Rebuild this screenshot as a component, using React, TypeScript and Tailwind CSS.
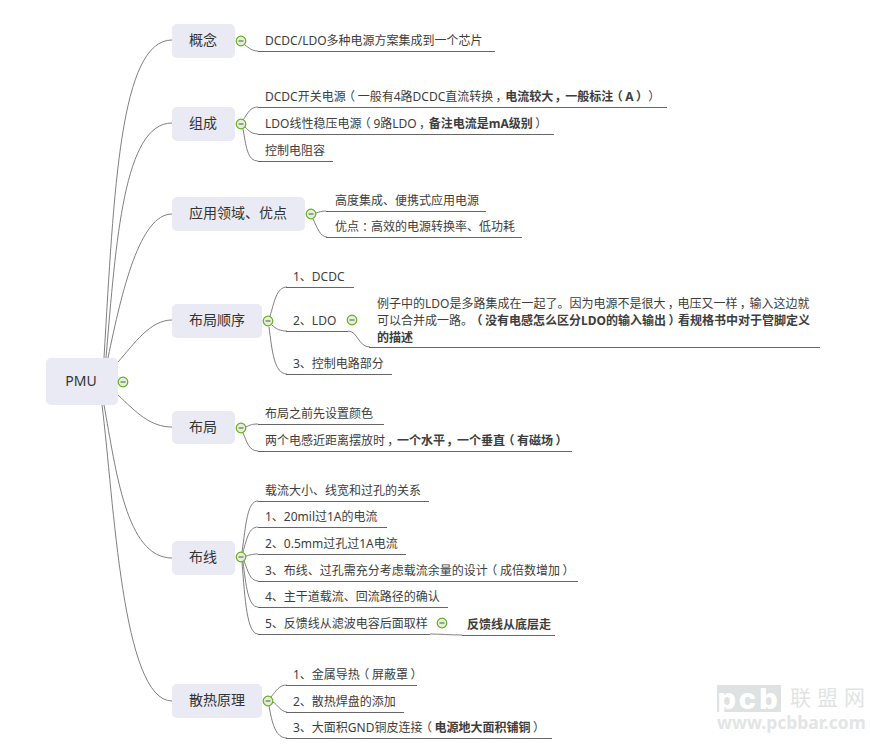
const font = 'font-["Noto_Sans","Noto_Sans_CJK_SC",sans-serif]'

const curves = [
    // root to topics
    'M104 358 C114 190 120 40 172 40',
    'M106 358 C116 240 124 123 172 123',
    'M108 358 C122 290 140 214 172 214',
    'M118 362 C134 344 150 320 172 320',
    'M118 395 C136 412 150 427 172 427',
    'M104 405 C116 470 126 558 172 558',
    'M102 405 C114 500 122 701 172 701',
    // concept
    'M245 45 C249 48 252 51 258 51',
    // parts
    'M243 120 C248 113 250 107 258 107',
    'M245 127 C249 131 252 134 258 134',
    'M243 129 C246 145 247 161 258 161',
    // usage
    'M316 213 C319 212 322 211 326 211',
    'M313 219 C317 227 320 237 327 237',
    // order
    'M270 316 C274 304 276 287 287 287',
    'M272 325 C276 329 280 331 287 331',
    'M269 327 C272 350 274 374 287 374',
    'M348 331 C358 331 358 347 370 347',
    // layout
    'M246 427 C250 425 252 424 258 424',
    'M243 433 C247 442 249 451 258 451',
    // routing
    'M242 552 C246 525 247 501 258 501',
    'M243 552 C247 538 249 527 258 527',
    'M246 556 C250 555 252 554 258 554',
    'M244 561 C248 571 250 581 258 581',
    'M243 562 C246 585 248 607 258 607',
    'M242 562 C245 600 247 634 258 634',
    'M430 634 C440 634 450 635 462 635',
    // heat
    'M271 697 C276 691 279 685 287 685',
    'M273 702 C277 704 281 712 287 712',
    'M269 706 C272 722 275 738 287 738',
]

function Collapse({ pos }: { pos: string }) {
    return (
        <svg className={`absolute ${pos}`} width="12" height="12" viewBox="0 0 12 12">
            <circle cx="6" cy="6" r="4.8" fill="#e4eeda" stroke="#5fb01c" strokeWidth="1.2" />
            <path d="M3.5 6 H8.5" stroke="#55554a" strokeWidth="1" />
        </svg>
    )
}

function Topic({ pos, children }: { pos: string; children: React.ReactNode }) {
    return (
        <div className={`absolute flex items-center rounded-[5px] bg-[#e9eaf3] pb-[3px] pl-[17px] text-[14px] text-[#333] ${pos}`}>
            {children}
        </div>
    )
}

function Leaf({ pos, children }: { pos: string; children: React.ReactNode }) {
    return (
        <div className={`absolute h-[24px] whitespace-nowrap border-b border-[#666] pt-px text-[12px] leading-[23px] text-[#3d3d3d] ${pos}`}>
            {children}
        </div>
    )
}

// fullwidth punctuation sits centred in its 12px cell in the picture
const P = ({ c }: { c: string }) => (
    <span className="inline-block w-[12px] text-center [font-feature-settings:'palt']">{c}</span>
)

export default function App() {
    return (
        <div className={`relative h-[749px] w-[870px] overflow-hidden bg-white ${font}`}>
            <svg className="absolute inset-0" width="870" height="749" fill="none" stroke="#808080">
                {curves.map((d) => (
                    <path key={d} d={d} />
                ))}
            </svg>

            {/* Root */}
            <div className="absolute left-[46px] top-[358px] flex h-[47px] w-[72px] items-center justify-center rounded-[5px] bg-[#e9eaf3] pb-[2px] pr-[2px] text-[14px] text-[#333]">
                PMU
            </div>
            <Collapse pos="left-[117px] top-[376px]" />

            {/* Topics */}
            <Topic pos="left-[172px] top-[24px] h-[34px] w-[63px]">概念</Topic>
            <Collapse pos="left-[235px] top-[35px]" />
            <Topic pos="left-[172px] top-[107px] h-[34px] w-[63px]">组成</Topic>
            <Collapse pos="left-[235px] top-[118px]" />
            <Topic pos="left-[172px] top-[197px] h-[34px] w-[133px]">应用领域、优点</Topic>
            <Collapse pos="left-[305px] top-[208px]" />
            <Topic pos="left-[172px] top-[304px] h-[34px] w-[90px]">布局顺序</Topic>
            <Collapse pos="left-[262px] top-[315px]" />
            <Topic pos="left-[172px] top-[411px] h-[33px] w-[63px]">布局</Topic>
            <Collapse pos="left-[235px] top-[422px]" />
            <Topic pos="left-[172px] top-[541px] h-[34px] w-[63px]">布线</Topic>
            <Collapse pos="left-[235px] top-[551px]" />
            <Topic pos="left-[172px] top-[684px] h-[34px] w-[90px]">散热原理</Topic>
            <Collapse pos="left-[262px] top-[695px]" />

            {/* Concept */}
            <Leaf pos="left-[258px] top-[28px] w-[237px] pl-[7px]">DCDC/LDO多种电源方案集成到一个芯片</Leaf>

            {/* Parts */}
            <Leaf pos="left-[258px] top-[84px] w-[409px] pl-[7px]">
                DCDC开关电源<P c="（" />一般有4路DCDC直流转换<P c="，" />
                <b>电流较大<P c="，" />一般标注<P c="（" />A<P c="）" /></b><P c="）" />
            </Leaf>
            <Leaf pos="left-[258px] top-[111px] w-[296px] pl-[7px]">
                LDO线性稳压电源<P c="（" />9路LDO<P c="，" /><b>备注电流是mA级别</b><P c="）" />
            </Leaf>
            <Leaf pos="left-[258px] top-[138px] w-[75px] pl-[7px]">控制电阻容</Leaf>

            {/* Usage */}
            <Leaf pos="left-[326px] top-[188px] w-[160px] pl-[9px]">高度集成、便携式应用电源</Leaf>
            <Leaf pos="left-[326px] top-[214px] w-[196px] pl-[9px]">优点<P c="：" />高效的电源转换率、低功耗</Leaf>

            {/* Order */}
            <Leaf pos="left-[286px] top-[264px] w-[68px] pl-[7px]">1、DCDC</Leaf>
            <Leaf pos="left-[286px] top-[308px] w-[62px] pl-[7px]">2、LDO</Leaf>
            <Collapse pos="left-[346px] top-[314px]" />
            <div className="absolute left-[369px] top-[294px] h-[54px] w-[451px] whitespace-nowrap border-b border-[#666] pl-[8px] pt-px text-[12px] leading-[17px] text-[#3d3d3d]">
                例子中的LDO是多路集成在一起了。因为电源不是很大<P c="，" />电压又一样<P c="，" />输入这边就
                <br />
                可以合并成一路。<b><P c="（" />没有电感怎么区分LDO的输入输出<P c="）" />看规格书中对于管脚定义</b>
                <br />
                <b>的描述</b>
            </div>
            <Leaf pos="left-[286px] top-[351px] w-[106px] pl-[7px]">3、控制电路部分</Leaf>

            {/* Layout */}
            <Leaf pos="left-[258px] top-[401px] w-[126px] pl-[7px]">布局之前先设置颜色</Leaf>
            <Leaf pos="left-[258px] top-[428px] w-[314px] pl-[7px]">
                两个电感近距离摆放时<P c="，" /><b>一个水平<P c="，" />一个垂直<P c="（" />有磁场<P c="）" /></b>
            </Leaf>

            {/* Routing */}
            <Leaf pos="left-[258px] top-[478px] w-[171px] pl-[7px]">载流大小、线宽和过孔的关系</Leaf>
            <Leaf pos="left-[258px] top-[504px] w-[129px] pl-[7px]">1、20mil过1A的电流</Leaf>
            <Leaf pos="left-[258px] top-[531px] w-[148px] pl-[7px]">2、0.5mm过孔过1A电流</Leaf>
            <Leaf pos="left-[258px] top-[558px] w-[320px] pl-[7px]">3、布线、过孔需充分考虑载流余量的设计<P c="（" />成倍数增加<P c="）" /></Leaf>
            <Leaf pos="left-[258px] top-[584px] w-[190px] pl-[7px]">4、主干道载流、回流路径的确认</Leaf>
            <Leaf pos="left-[258px] top-[611px] w-[172px] pl-[7px]">5、反馈线从滤波电容后面取样</Leaf>
            <Collapse pos="left-[436px] top-[617px]" />
            <Leaf pos="left-[462px] top-[612px] w-[93px] pl-[5px]">
                <b>反馈线从底层走</b>
            </Leaf>

            {/* Heat */}
            <Leaf pos="left-[286px] top-[662px] w-[131px] pl-[7px]">1、金属导热<P c="（" />屏蔽罩<P c="）" /></Leaf>
            <Leaf pos="left-[286px] top-[689px] w-[118px] pl-[7px]">2、散热焊盘的添加</Leaf>
            <Leaf pos="left-[286px] top-[715px] w-[266px] pl-[7px]">
                3、大面积GND铜皮连接<P c="（" /><b>电源地大面积铺铜</b><P c="）" />
            </Leaf>

            {/* Watermark */}
            <div className="absolute left-[717px] top-[685px] flex h-[27px] w-[64px] items-center justify-center bg-[#dfe2e2] font-['Inter'] text-[29px] font-extrabold leading-[27px] tracking-[3px] text-white">
                pcb
            </div>
            <div className="absolute left-[790px] top-[684px] whitespace-nowrap text-[21px] leading-[26px] tracking-[6px] text-[#e2e4e4]">
                联盟网
            </div>
            <div className="absolute left-[717px] top-[714px] whitespace-nowrap text-[17.5px] font-bold leading-[16px] text-[#e3e5e5]">
                www.pcbbar.com
            </div>
        </div>
    )
}
